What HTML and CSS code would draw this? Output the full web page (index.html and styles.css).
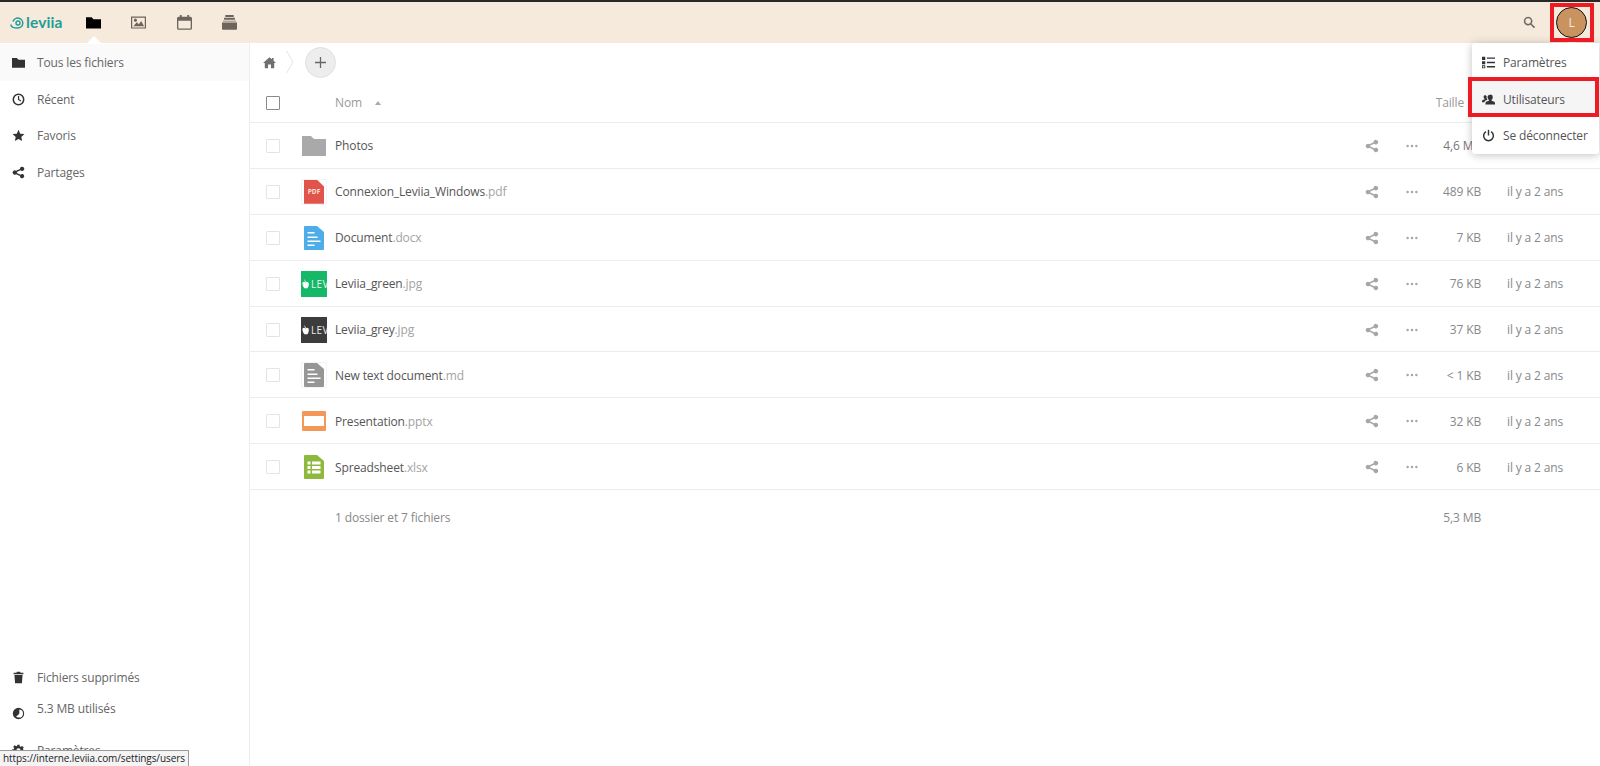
FILE: index.html
```html
<!DOCTYPE html>
<html lang="fr">
<head>
<meta charset="utf-8">
<title>Fichiers - Leviia</title>
<link rel="stylesheet" href="styles.css">
</head>
<body>
<svg class="defs" width="0" height="0">
  <symbol id="i-folder" viewBox="0 0 16 16"><path d="M0 2.500h6l2 2h8v10H0z"/></symbol>
  <symbol id="i-share" viewBox="0 0 16 16"><path d="M12.500 1a2.600 2.600 0 1 1-2 4.300L6 7.400a2.700 2.700 0 0 1 0 1.200l4.500 2.100a2.600 2.600 0 1 1-.7 1.500L5 10.100a2.600 2.600 0 1 1 0-4.200l4.800-2.200A2.600 2.600 0 0 1 12.500 1z"/></symbol>
  <symbol id="i-dots" viewBox="0 0 16 16"><circle cx="3" cy="8" r="1.400"/><circle cx="8" cy="8" r="1.400"/><circle cx="13" cy="8" r="1.400"/></symbol>
</svg>

<header class="topbar">
  <a class="logo">
    <svg class="logo-mark" viewBox="0 0 14 12"><path d="M.9 7.500C1 10 4 11.100 7.800 11.100A5 5 0 1 0 3 4.600" fill="none" stroke="#1f9e96" stroke-width="1.500"/><circle cx="8" cy="6" r="2" fill="none" stroke="#1f9e96" stroke-width="1.400"/></svg>
    <span class="logo-text">leviia</span>
  </a>
  <nav class="apps">
    <a class="app app-active">
      <svg class="app-icon" viewBox="0 0 16 16"><use href="#i-folder"/></svg>
    </a>
    <a class="app">
      <svg class="app-icon" viewBox="0 0 16 16"><path fill-rule="evenodd" d="M0 1.500h16v13H0zM1.300 2.800v10.400h13.400V2.800zM2.500 12l3.700-4.300 2.200 2.200 2.400-3.400 3.200 5.500zM4.700 3.800a1.700 1.700 0 1 1 0 3.400 1.700 1.700 0 0 1 0-3.400z"/></svg>
    </a>
    <a class="app">
      <svg class="app-icon" viewBox="0 0 16 16"><path fill-rule="evenodd" d="M3 0h2v1.800h6V0h2v1.800h1.200A1.800 1.800 0 0 1 16 3.600V14a1.800 1.800 0 0 1-1.800 1.800H1.800A1.800 1.800 0 0 1 0 14V3.600a1.800 1.800 0 0 1 1.800-1.800H3zM1.400 6.200V14c0 .3.100.4.400.4h12.400c.3 0 .4-.1.4-.4V6.200z"/></svg>
    </a>
    <a class="app">
      <svg class="app-icon" viewBox="0 0 16 16"><path d="M3.500 0h9v2h-9zM2.200 3h11.600v2H2.200zM1 6h14v1H1zM0 8h16v6.600a1 1 0 0 1-1 1H1a1 1 0 0 1-1-1z"/></svg>
    </a>
  </nav>
  <svg class="search" viewBox="0 0 16 16"><path fill-rule="evenodd" d="M6.300 1a5.300 5.300 0 0 1 4.300 8.400l4.300 4.200-1.400 1.400-4.200-4.300A5.300 5.300 0 1 1 6.300 1zm0 1.900a3.400 3.400 0 1 0 0 6.800 3.400 3.400 0 0 0 0-6.800z"/></svg>
  <div class="avatar">L</div>
</header>

<div class="main">
  <aside class="sidebar">
    <ul class="nav nav-top">
      <li class="nav-item nav-current"><svg class="nav-icon" viewBox="0 0 16 16"><use href="#i-folder"/></svg>Tous les fichiers</li>
      <li class="nav-item"><svg class="nav-icon" viewBox="0 0 16 16"><circle cx="8" cy="8" r="6.400" fill="none" stroke="currentColor" stroke-width="1.900"/><path d="M7.300 3.600h1.500v4l2.600 1.700-.8 1.200-3.300-2.200z"/></svg>Récent</li>
      <li class="nav-item"><svg class="nav-icon" viewBox="0 0 16 16"><path d="M8 1l2.100 4.800 5.200.5-3.900 3.500 1.100 5.100L8 12.300l-4.500 2.600 1.100-5.100L.7 6.300l5.200-.5z"/></svg>Favoris</li>
      <li class="nav-item"><svg class="nav-icon" viewBox="0 0 16 16"><use href="#i-share"/></svg>Partages</li>
    </ul>
    <ul class="nav nav-bottom">
      <li class="nav-item"><svg class="nav-icon" viewBox="0 0 16 16"><path d="M6 1h4l.5 1H14v2H2V2h3.500zM3 5h10l-.8 10H3.800z"/></svg>Fichiers supprimés</li>
      <li class="nav-item nav-quota"><svg class="nav-icon quota-icon" viewBox="0 0 16 16"><path fill-rule="evenodd" d="M8 1a7 7 0 1 1 0 14A7 7 0 0 1 8 1zm1 2v5.300L5 12a5 5 0 0 0 3 1 5 5 0 0 0 1-10z"/></svg>5.3 MB utilisés</li>
      <li class="nav-item"><svg class="nav-icon" viewBox="-2 -1 18 18"><path fill-rule="evenodd" d="M5.500 0h3l.4 2.300 1.300.6 2-1.300 2.100 2.100-1.300 2 .6 1.300 2.400.5v3l-2.400.4-.6 1.300 1.300 2-2.100 2.100-2-1.300-1.300.6-.4 2.300h-3l-.4-2.300-1.300-.6-2 1.300-2.100-2.100 1.300-2-.6-1.300L-2 9.500v-3l2.400-.4.600-1.300-1.300-2 2.100-2.100 2 1.300 1.300-.6zM7 5a3 3 0 1 0 0 6 3 3 0 0 0 0-6z"/></svg>Paramètres</li>
    </ul>
  </aside>

  <section class="content">
    <div class="crumbs">
      <svg class="home" viewBox="0 0 16 16"><path d="M8 1.500l3 2.600V2.500h2v3.400l3 2.600h-2.200V15H9.800v-4.500H6.200V15H2.200V8.500H0z"/></svg>
      <svg class="crumb-sep" viewBox="0 0 8 24"><path d="M.5 1l6.500 11-6.500 11" fill="none" stroke="#e4e4e4" stroke-width="1"/></svg>
      <button class="add" type="button"><svg viewBox="0 0 12 12"><path d="M5.300 0h1.400v5.300H12v1.400H6.700V12H5.300V6.700H0V5.300h5.300z"/></svg></button>
    </div>

    <div class="row row-head">
      <span class="check check-head"></span>
      <span></span>
      <span class="head-name">Nom<i class="sort"></i></span>
      <span></span><span></span>
      <span class="size head-size">Taille</span>
      <span></span>
    </div>

    <div class="row">
      <span class="check"></span>
      <span class="thumb"><svg class="fi fi-folder" viewBox="0 0 24 20"><path d="M0 0h9l3 3h12v17H0z"/></svg></span>
      <span class="name">Photos</span>
      <svg class="act act-share" viewBox="0 0 16 16"><use href="#i-share"/></svg>
      <svg class="act act-dots" viewBox="0 0 16 16"><use href="#i-dots"/></svg>
      <span class="size size-dark">4,6 MB</span>
      <span class="date">il y a 2 ans</span>
    </div>

    <div class="row">
      <span class="check"></span>
      <span class="thumb"><span class="frame"><span class="pdf">PDF</span></span></span>
      <span class="name">Connexion_Leviia_Windows<span class="ext">.pdf</span></span>
      <svg class="act act-share" viewBox="0 0 16 16"><use href="#i-share"/></svg>
      <svg class="act act-dots" viewBox="0 0 16 16"><use href="#i-dots"/></svg>
      <span class="size">489 KB</span>
      <span class="date">il y a 2 ans</span>
    </div>

    <div class="row">
      <span class="check"></span>
      <span class="thumb"><svg class="fi fi-doc" viewBox="0 0 20 24"><path fill="#4dade8" d="M1 0h12l7 6v17a1 1 0 0 1-1 1H1a1 1 0 0 1-1-1V1a1 1 0 0 1 1-1z"/><path fill="#fff" d="M3.500 6h7v1.500h-7zM3.500 10.500h10v1.500h-10zM3.500 14.500h13v1.500h-13zM3.500 18.500h7v1.500h-7z"/></svg></span>
      <span class="name">Document<span class="ext">.docx</span></span>
      <svg class="act act-share" viewBox="0 0 16 16"><use href="#i-share"/></svg>
      <svg class="act act-dots" viewBox="0 0 16 16"><use href="#i-dots"/></svg>
      <span class="size">7 KB</span>
      <span class="date">il y a 2 ans</span>
    </div>

    <div class="row">
      <span class="check"></span>
      <span class="thumb"><span class="pic pic-green"><svg class="pic-mark" viewBox="0.5 0 7 10"><path d="M1 3.500c1-1 2-1 3 0 1-1 2-1 3 0 .8 2 0 5-1.500 6-.7-.3-1.500-.3-2 0C2 8.500.5 6 1 3.500zM2.500 0l2 2.500L3.600 3z"/></svg><span class="pic-text">LEV</span></span></span>
      <span class="name">Leviia_green<span class="ext">.jpg</span></span>
      <svg class="act act-share" viewBox="0 0 16 16"><use href="#i-share"/></svg>
      <svg class="act act-dots" viewBox="0 0 16 16"><use href="#i-dots"/></svg>
      <span class="size">76 KB</span>
      <span class="date">il y a 2 ans</span>
    </div>

    <div class="row">
      <span class="check"></span>
      <span class="thumb"><span class="pic pic-grey"><svg class="pic-mark" viewBox="0.5 0 7 10"><path d="M1 3.500c1-1 2-1 3 0 1-1 2-1 3 0 .8 2 0 5-1.500 6-.7-.3-1.500-.3-2 0C2 8.500.5 6 1 3.500zM2.500 0l2 2.500L3.600 3z"/></svg><span class="pic-text">LEV</span></span></span>
      <span class="name">Leviia_grey<span class="ext">.jpg</span></span>
      <svg class="act act-share" viewBox="0 0 16 16"><use href="#i-share"/></svg>
      <svg class="act act-dots" viewBox="0 0 16 16"><use href="#i-dots"/></svg>
      <span class="size">37 KB</span>
      <span class="date">il y a 2 ans</span>
    </div>

    <div class="row">
      <span class="check"></span>
      <span class="thumb"><span class="frame"><svg class="fi fi-doc" viewBox="0 0 20 24"><path fill="#969696" d="M1 0h12l7 6v17a1 1 0 0 1-1 1H1a1 1 0 0 1-1-1V1a1 1 0 0 1 1-1z"/><path fill="#fff" d="M3.500 6h7v1.500h-7zM3.500 10.500h10v1.500h-10zM3.500 14.500h13v1.500h-13zM3.500 18.500h7v1.500h-7z"/></svg></span></span>
      <span class="name">New text document<span class="ext">.md</span></span>
      <svg class="act act-share" viewBox="0 0 16 16"><use href="#i-share"/></svg>
      <svg class="act act-dots" viewBox="0 0 16 16"><use href="#i-dots"/></svg>
      <span class="size">&lt; 1 KB</span>
      <span class="date">il y a 2 ans</span>
    </div>

    <div class="row">
      <span class="check"></span>
      <span class="thumb"><svg class="fi fi-ppt" viewBox="0 0 24 20"><path fill="#f4985a" d="M1 0h22a1 1 0 0 1 1 1v18a1 1 0 0 1-1 1H1a1 1 0 0 1-1-1V1a1 1 0 0 1 1-1z"/><path fill="#fff" d="M2 5h20v10H2z"/></svg></span>
      <span class="name">Presentation<span class="ext">.pptx</span></span>
      <svg class="act act-share" viewBox="0 0 16 16"><use href="#i-share"/></svg>
      <svg class="act act-dots" viewBox="0 0 16 16"><use href="#i-dots"/></svg>
      <span class="size">32 KB</span>
      <span class="date">il y a 2 ans</span>
    </div>

    <div class="row">
      <span class="check"></span>
      <span class="thumb"><svg class="fi fi-doc" viewBox="0 0 20 24"><path fill="#8fb83e" d="M1 0h12l7 6v17a1 1 0 0 1-1 1H1a1 1 0 0 1-1-1V1a1 1 0 0 1 1-1z"/><path fill="#fff" d="M3.500 6.500h3v3h-3zM8 6.500h8.500v3H8zM3.500 11h3v3h-3zM8 11h8.500v3H8zM3.500 15.500h3v3h-3zM8 15.500h8.500v3H8z"/></svg></span>
      <span class="name">Spreadsheet<span class="ext">.xlsx</span></span>
      <svg class="act act-share" viewBox="0 0 16 16"><use href="#i-share"/></svg>
      <svg class="act act-dots" viewBox="0 0 16 16"><use href="#i-dots"/></svg>
      <span class="size">6 KB</span>
      <span class="date">il y a 2 ans</span>
    </div>

    <div class="row row-summary">
      <span></span><span></span>
      <span class="summary">1 dossier et 7 fichiers</span>
      <span></span><span></span>
      <span class="size">5,3 MB</span>
      <span></span>
    </div>
  </section>
</div>

<div class="menu">
  <div class="menu-item"><svg class="menu-icon" viewBox="0 0 16 16"><path d="M0 1h4v4H0zM6 1.700h10v1.800H6zM0 6.500h4v3.500H0zM6 7h10v1.800H6zM6 12.300h10v1.800H6z"/><path fill-rule="evenodd" d="M0 11.500h4V15H0zm1 1v1.500h2v-1.500z"/></svg>Paramètres</div>
  <div class="menu-item menu-item-hover"><svg class="menu-icon" viewBox="0 0 16 16"><path d="M10 2a3.200 3.200 0 0 1 3.200 3.400c0 1.300-.6 2.500-1.500 3l.2 1c2 .6 4.100 1.400 4.100 2.500V14H4.300v-2.100c0-1.100 2.100-1.900 4.100-2.500l.2-1c-1-.5-1.700-1.700-1.700-3A3.200 3.200 0 0 1 10 2zM4.500 3.500c.5 0 1 .1 1.300.4-.4 1.500-.1 3.200.9 4.400-1.400.6-3.700 1.200-3.700 3.200H0v-1.600c0-.9 1.500-1.500 3-1.900l.1-.8c-.7-.4-1.100-1.300-1.100-2.300 0-1.300 1-2.400 2.500-2.400z"/></svg>Utilisateurs</div>
  <div class="menu-item"><svg class="menu-icon" viewBox="0 0 16 16"><path d="M7.100 1h1.800v7H7.100z"/><path d="M4.800 3.300a6 6 0 1 0 6.400 0" fill="none" stroke="currentColor" stroke-width="1.800"/></svg>Se déconnecter</div>
</div>

<i class="mark mark-avatar"></i>
<i class="mark mark-users"></i>
<div class="status">https://interne.leviia.com/settings/users</div>
</body>
</html>
```

FILE: styles.css
```css
* { box-sizing: border-box; }
html, body { height: 100%; margin: 0; }
body {
  display: flex;
  flex-direction: column;
  height: 766px;
  overflow: hidden;
  background: #fff;
  color: #555;
  font-family: "Open Sans", "Liberation Sans", sans-serif;
  font-size: 12px;
  letter-spacing: -.14px;
}
.defs { position: absolute; }
svg { fill: currentColor; display: block; }

/* top bar */
.topbar {
  flex: none;
  display: flex;
  align-items: center;
  height: 43px;
  border-top: 2px solid #2a2727;
  background: #f6eadd;
  position: relative;
}
.logo { display: flex; align-items: center; gap: 2px; width: 71px; padding-left: 10px; }
.logo-mark { width: 14px; height: 12px; flex: none; }
.logo-text { color: #1f9e96; font-family: "Lato", sans-serif; font-weight: 700; font-size: 15.500px; line-height: 1; letter-spacing: .1px; }
.apps { display: flex; }
.app {
  width: 45.300px;
  height: 41px;
  display: flex;
  align-items: center;
  justify-content: center;
  color: #6e645c;
  position: relative;
}
.app-active { color: #000; }
.app-active::after {
  content: "";
  position: absolute;
  left: 50%;
  bottom: 0;
  margin-left: -7px;
  border: 7px solid transparent;
  border-top: 0;
  border-bottom-color: #fff;
}
.app-icon { width: 15px; height: 15px; }
.search { width: 13px; height: 13px; color: #6f6a66; margin-left: auto; margin-right: 20px; }
.avatar {
  width: 31px;
  height: 31px;
  margin-right: 13px;
  border-radius: 50%;
  background: #c8935f;
  border: 1.500px solid #111;
  color: #f6eadd;
  font-size: 12px;
  display: flex;
  align-items: center;
  justify-content: center;
  position: relative;
}
.avatar::after {
  content: "";
  position: absolute;
  left: 50%;
  bottom: -6px;
  margin-left: -5px;
  border: 5px solid transparent;
  border-top: 0;
  border-bottom-color: #fff;
}

/* layout */
.main { flex: 1; min-height: 0; display: flex; }

.sidebar {
  flex: none;
  width: 250px;
  display: flex;
  flex-direction: column;
  border-right: 1px solid #ededed;
  overflow: hidden;
}
.nav { list-style: none; margin: 0; padding: 0; }
.nav-top { padding-top: 1px; }
.nav-bottom { margin-top: auto; margin-bottom: -3px; }
.nav-item {
  display: flex;
  align-items: center;
  height: 36.700px;
  padding-left: 12px;
  color: #666;
  white-space: nowrap;
}
.nav-current { background: #fafafa; }
.nav-icon { width: 13px; height: 13px; flex: none; margin-right: 12px; color: #333; }
.nav-quota { height: 36px; align-items: flex-start; padding-top: 4px; }
.quota-icon { margin-top: 7px; }

/* file list */
.content { flex: 1; min-width: 0; }
.crumbs { display: flex; align-items: center; height: 38px; margin-bottom: 1px; padding-left: 13px; }
.home { width: 13px; height: 13px; color: #707070; }
.crumb-sep { width: 8px; height: 24px; margin-left: 10px; }
.add {
  width: 31px;
  height: 31px;
  margin-left: 11px;
  padding: 0;
  border: 1px solid #e0e0e0;
  border-radius: 50%;
  background: #ededed;
  color: #666;
  display: flex;
  align-items: center;
  justify-content: center;
}
.add svg { width: 11px; height: 11px; }

.row {
  display: grid;
  grid-template-columns: 46px 39px 1fr 40px 40px 49px 119px;
  align-items: center;
  height: 45.900px;
  padding-top: 1px;
  border-bottom: 1px solid #ededed;
  color: #555;
}
.row-head { height: 41px; }
.row-summary { border-bottom: 0; height: 53px; color: #888; }
.check {
  width: 14px;
  height: 14px;
  margin-left: 16px;
  border: 1px solid #e4e4e4;
  border-radius: 1px;
}
.check-head { border-color: #8a8a8a; }
.head-name { color: #999; display: flex; align-items: center; }
.sort {
  margin-left: 13px;
  border: 3px solid transparent;
  border-top: 0;
  border-bottom: 4px solid #aaa;
}
.thumb { width: 36px; display: flex; justify-content: center; }
.frame {
  width: 26px;
  height: 26px;
  border: 1px solid #f3f3f3;
  border-radius: 2px;
  display: flex;
  align-items: center;
  justify-content: center;
}
.name { white-space: nowrap; color: #555; }
.ext { color: #a3a3a3; }
.fi-folder { width: 24px; height: 20px; color: #a9a9a9; }
.fi-doc { width: 20px; height: 24px; }
.fi-ppt { width: 24px; height: 20px; }
.pdf {
  width: 20px;
  height: 24px;
  background: #e1544b;
  clip-path: polygon(0 0, 65% 0, 100% 28%, 100% 100%, 0 100%);
  color: #fde2de;
  font-size: 6.500px;
  font-weight: 700;
  letter-spacing: 0;
  display: flex;
  align-items: center;
  justify-content: center;
}
.pic {
  width: 26px;
  height: 26px;
  display: flex;
  align-items: center;
  overflow: hidden;
  color: #fff;
}
.pic-green { background: #14b866; }
.pic-grey { background: #3c3c3c; }
.pic-mark { width: 7px; height: 10px; flex: none; margin-left: 1px; }
.pic-text { font-size: 10px; letter-spacing: .3px; margin-left: 2px; line-height: 1; white-space: nowrap; opacity: .9; }
.act { justify-self: center; width: 14px; height: 14px; color: #a6a6a6; }
.size { text-align: right; color: #888; white-space: nowrap; }
.size-dark { color: #777; }
.head-size { color: #999; padding-right: 17px; }
.date { padding-left: 26px; color: #888; white-space: nowrap; }
.summary { color: #888; }

/* account menu */
.menu {
  position: absolute;
  left: 1472px;
  top: 43px;
  width: 127px;
  padding-top: 1px;
  background: #fff;
  border-radius: 3px;
  box-shadow: 0 1px 8px rgba(0, 0, 0, .25);
}
.menu-item {
  display: flex;
  align-items: center;
  height: 36.700px;
  padding-left: 10px;
  color: #555;
  white-space: nowrap;
}
.menu-item-hover { background: #f5f5f5; }
.menu-icon { width: 13px; height: 13px; flex: none; margin-right: 8px; color: #333; }

/* annotation boxes */
.mark { position: absolute; border: 4px solid #ed1c24; }
.mark-avatar { left: 1550px; top: 3px; width: 44px; height: 39px; }
.mark-users { left: 1468px; top: 77px; width: 131px; height: 40px; }

/* browser status bubble */
.status {
  position: absolute;
  left: 0;
  bottom: 0;
  height: 16px;
  padding: 0 3px;
  background: #f4f4f4;
  border: 1px solid #9a9a9a;
  border-left: 0;
  border-bottom: 0;
  color: #222;
  font-size: 10px;
  letter-spacing: -.1px;
  line-height: 15px;
  white-space: nowrap;
}
```
